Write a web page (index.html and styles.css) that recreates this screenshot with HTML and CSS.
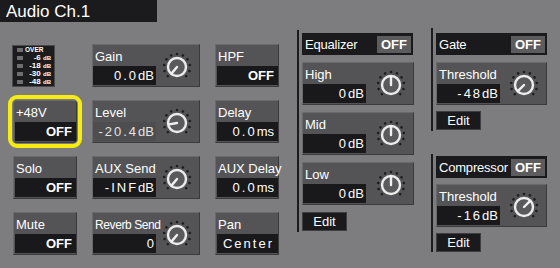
FILE: index.html
```html
<!DOCTYPE html>
<html lang="en">
<head>
  <meta charset="UTF-8" />
  <meta name="viewport" content="width=device-width, initial-scale=1.0"/>
  <title>Audio Ch.1</title>
  <link rel="stylesheet" href="styles.css">
</head>
<body>

  <!-- shared knob parts: scale dots + ring -->
  <svg class="defs" width="0" height="0">
    <defs>
      <g id="knob-base">
        <g fill="#1c1c1e">
          <circle cx="0" cy="-13" r="1.3" transform="rotate(-135)"/>
          <circle cx="0" cy="-13" r="1.3" transform="rotate(-108)"/>
          <circle cx="0" cy="-13" r="1.3" transform="rotate(-81)"/>
          <circle cx="0" cy="-13" r="1.3" transform="rotate(-54)"/>
          <circle cx="0" cy="-13" r="1.3" transform="rotate(-27)"/>
          <circle cx="0" cy="-13" r="1.3"/>
          <circle cx="0" cy="-13" r="1.3" transform="rotate(27)"/>
          <circle cx="0" cy="-13" r="1.3" transform="rotate(54)"/>
          <circle cx="0" cy="-13" r="1.3" transform="rotate(81)"/>
          <circle cx="0" cy="-13" r="1.3" transform="rotate(108)"/>
          <circle cx="0" cy="-13" r="1.3" transform="rotate(135)"/>
        </g>
        <circle cx="0" cy="0" r="9" fill="#5a5a5c" stroke="#ececec" stroke-width="2.4"/>
      </g>
    </defs>
  </svg>

  <div class="title">Audio Ch.1</div>

  <div class="main">

    <div class="controls">
      <!-- row 1 -->
      <div class="meter">
        <div class="meter-row"><span class="led"></span><span class="over">OVER</span></div>
        <div class="meter-row"><span class="led"></span><span>-6 <small>dB</small></span></div>
        <div class="meter-row"><span class="led"></span><span>-18 <small>dB</small></span></div>
        <div class="meter-row"><span class="led"></span><span>-30 <small>dB</small></span></div>
        <div class="meter-row"><span class="led"></span><span>-48 <small>dB</small></span></div>
      </div>
      <div class="panel">
        <div class="panel-label">Gain</div>
        <div class="panel-value"><span class="num">0.0</span>dB</div>
        <svg class="knob" viewBox="-15 -15 30 30"><use href="#knob-base"/><line x1="0" y1="0" x2="0" y2="-8" transform="rotate(-140)"/></svg>
      </div>
      <div class="btn">
        <div class="btn-label">HPF</div>
        <div class="btn-value off">OFF</div>
      </div>

      <!-- row 2 -->
      <div class="btn selected">
        <div class="btn-label">+48V</div>
        <div class="btn-value off">OFF</div>
      </div>
      <div class="panel">
        <div class="panel-label">Level</div>
        <div class="panel-value dim"><span class="num">-20.4</span>dB</div>
        <svg class="knob" viewBox="-15 -15 30 30"><use href="#knob-base"/><line x1="0" y1="0" x2="0" y2="-8" transform="rotate(-100)"/></svg>
      </div>
      <div class="btn">
        <div class="btn-label">Delay</div>
        <div class="btn-value"><span class="num">0.0</span>ms</div>
      </div>

      <!-- row 3 -->
      <div class="btn">
        <div class="btn-label">Solo</div>
        <div class="btn-value off">OFF</div>
      </div>
      <div class="panel">
        <div class="panel-label">AUX Send</div>
        <div class="panel-value"><span class="num">-INF</span>dB</div>
        <svg class="knob" viewBox="-15 -15 30 30"><use href="#knob-base"/><line x1="0" y1="0" x2="0" y2="-8" transform="rotate(-140)"/></svg>
      </div>
      <div class="btn">
        <div class="btn-label">AUX Delay</div>
        <div class="btn-value"><span class="num">0.0</span>ms</div>
      </div>

      <!-- row 4 -->
      <div class="btn">
        <div class="btn-label">Mute</div>
        <div class="btn-value off">OFF</div>
      </div>
      <div class="panel">
        <div class="panel-label narrow">Reverb Send</div>
        <div class="panel-value">0</div>
        <svg class="knob" viewBox="-15 -15 30 30"><use href="#knob-base"/><line x1="0" y1="0" x2="0" y2="-8" transform="rotate(-140)"/></svg>
      </div>
      <div class="btn">
        <div class="btn-label">Pan</div>
        <div class="btn-value"><span class="num">Center</span></div>
      </div>
    </div>

    <div class="sep sep-eq"></div>

    <div class="section eq">
      <div class="head">Equalizer <span class="head-off">OFF</span></div>
      <div class="panel">
        <div class="panel-label">High</div>
        <div class="panel-value"><span class="num">0</span>dB</div>
        <svg class="knob" viewBox="-15 -15 30 30"><use href="#knob-base"/><line x1="0" y1="0" x2="0" y2="-8"/></svg>
      </div>
      <div class="panel">
        <div class="panel-label">Mid</div>
        <div class="panel-value"><span class="num">0</span>dB</div>
        <svg class="knob" viewBox="-15 -15 30 30"><use href="#knob-base"/><line x1="0" y1="0" x2="0" y2="-8"/></svg>
      </div>
      <div class="panel">
        <div class="panel-label">Low</div>
        <div class="panel-value"><span class="num">0</span>dB</div>
        <svg class="knob" viewBox="-15 -15 30 30"><use href="#knob-base"/><line x1="0" y1="0" x2="0" y2="-8"/></svg>
      </div>
      <div class="edit">Edit</div>
    </div>

    <div class="dyn">
      <div class="group gate">
        <div class="sep"></div>
        <div class="section">
          <div class="head">Gate <span class="head-off">OFF</span></div>
          <div class="panel">
            <div class="panel-label">Threshold</div>
            <div class="panel-value"><span class="num">-48</span>dB</div>
            <svg class="knob" viewBox="-15 -15 30 30"><use href="#knob-base"/><line x1="0" y1="0" x2="0" y2="-8" transform="rotate(-135)"/></svg>
          </div>
          <div class="edit">Edit</div>
        </div>
      </div>
      <div class="group comp">
        <div class="sep"></div>
        <div class="section">
          <div class="head">Compressor <span class="head-off">OFF</span></div>
          <div class="panel">
            <div class="panel-label">Threshold</div>
            <div class="panel-value"><span class="num">-16</span>dB</div>
            <svg class="knob" viewBox="-15 -15 30 30"><use href="#knob-base"/><line x1="0" y1="0" x2="0" y2="-8" transform="rotate(45)"/></svg>
          </div>
          <div class="edit">Edit</div>
        </div>
      </div>
    </div>

  </div>

</body>
</html>
```

FILE: styles.css
```css
body {
  margin: 0;
  width: 560px;
  height: 268px;
  overflow: hidden;
  background-color: #7d7d7f;
  font-family: "Liberation Sans", Arial, sans-serif;
  color: #fff;
}

.defs {
  position: absolute;
}

.title {
  width: 157px;
  height: 22px;
  box-sizing: border-box;
  padding-left: 6px;
  background: #1b1a1c;
  font-size: 17px;
  line-height: 23px;
}

.main {
  display: flex;
  align-items: flex-start;
  margin-top: 6px;
  padding-left: 13px;
}

/* left block: 3 columns x 4 rows */
.controls {
  display: grid;
  grid-template-columns: 64px 108px 64px;
  grid-auto-rows: 43px;
  column-gap: 15px;
  row-gap: 13px;
  margin-top: 16px;
}

/* level meter */
.meter {
  width: 43px;
  height: 42px;
  margin: 1px 0 0 -1px;
  box-sizing: border-box;
  padding: 0 3px 0 4px;
  background: #1c1c1e;
  border: 1px solid #4a4a4c;
  display: flex;
  flex-direction: column;
}

.meter-row {
  display: flex;
  align-items: center;
  justify-content: space-between;
  height: 8px;
  font-size: 8px;
  font-weight: bold;
  line-height: 8px;
}

.meter-row small {
  font-size: 6px;
}

.meter-row .over {
  font-size: 6.5px;
  margin-right: auto;
  margin-left: 2px;
}

.led {
  width: 6px;
  height: 4px;
  background: #6e6e70;
}

/* on/off style buttons */
.btn {
  display: flex;
  flex-direction: column;
  box-sizing: border-box;
  background: #545456;
  border: 1px solid;
  border-color: #6a6a6c #3a3a3c #3a3a3c #6a6a6c;
}

.btn-label {
  height: 21px;
  box-sizing: border-box;
  padding: 4px 0 0 2px;
  font-size: 13px;
  white-space: nowrap;
}

.btn-value {
  flex: 1;
  margin: 0 0 1px 1px;
  padding-right: 4px;
  background: #19191b;
  text-align: right;
  font-size: 13px;
  line-height: 19px;
}

.btn-value.off {
  font-weight: bold;
}

.selected {
  outline: 4px solid #f6ec12;
  outline-offset: 1px;
  border-radius: 4px;
}

/* panels with value + knob */
.panel {
  display: grid;
  grid-template-columns: 63px 1fr;
  grid-template-rows: 1fr 20px;
  box-sizing: border-box;
  height: 43px;
  background: #545456;
  border: 1px solid;
  border-color: #6a6a6c #3a3a3c #3a3a3c #6a6a6c;
}

.panel-label {
  padding: 4px 0 0 2px;
  font-size: 13px;
  white-space: nowrap;
}

.panel-label.narrow {
  font-size: 12px;
  letter-spacing: -0.4px;
  padding-top: 5px;
}

.panel-value {
  grid-column: 1;
  grid-row: 2;
  margin: 0 0 1px 0;
  padding-right: 2px;
  background: #19191b;
  text-align: right;
  font-size: 13px;
  line-height: 20px;
}

.panel-value.dim {
  background: #4e4e50;
  color: #e4e4e4;
}

.num {
  letter-spacing: 2px;
}

.knob {
  grid-column: 2;
  grid-row: 1 / 3;
  align-self: center;
  justify-self: end;
  width: 30px;
  height: 30px;
  margin: 2px 7px 0 0;
}

.knob line {
  stroke: #f0f0f0;
  stroke-width: 2.4;
  stroke-linecap: round;
}

/* separators and right sections */
.sep {
  width: 2px;
  background: #1c1c1e;
}

.sep-eq {
  height: 202px;
  margin: 2px 0 0 18px;
}

.section {
  display: flex;
  flex-direction: column;
  width: 111px;
  margin-left: 3px;
  padding-top: 5px;
}

.section .panel {
  margin-top: 7px;
}

.eq {
  width: 112px;
}

.eq .head {
  margin-right: 1px;
}

.head {
  display: flex;
  align-items: center;
  justify-content: space-between;
  height: 22px;
  box-sizing: border-box;
  padding: 0 2px 0 3px;
  background: #1a1a1c;
  font-size: 13px;
  letter-spacing: -0.2px;
}

.head-off {
  height: 17px;
  padding: 0 4px;
  background: #5c5c5e;
  font-weight: bold;
  letter-spacing: 0;
  line-height: 18px;
}

.edit {
  width: 45px;
  height: 19px;
  margin-top: 7px;
  background: #1a1a1c;
  border: 1px solid #3e3e40;
  box-sizing: border-box;
  text-align: center;
  font-size: 13px;
  line-height: 18px;
}

.dyn {
  display: flex;
  flex-direction: column;
  margin-left: 17px;
}

.group {
  display: flex;
}

.gate .edit {
  margin-top: 6px;
}

.gate .section {
  padding-bottom: 1px;
}

.comp {
  margin-top: 23px;
}

.comp .section {
  padding-top: 2px;
}

.comp .panel {
  margin-top: 6px;
}

.comp .edit {
  margin-top: 6px;
}
```
